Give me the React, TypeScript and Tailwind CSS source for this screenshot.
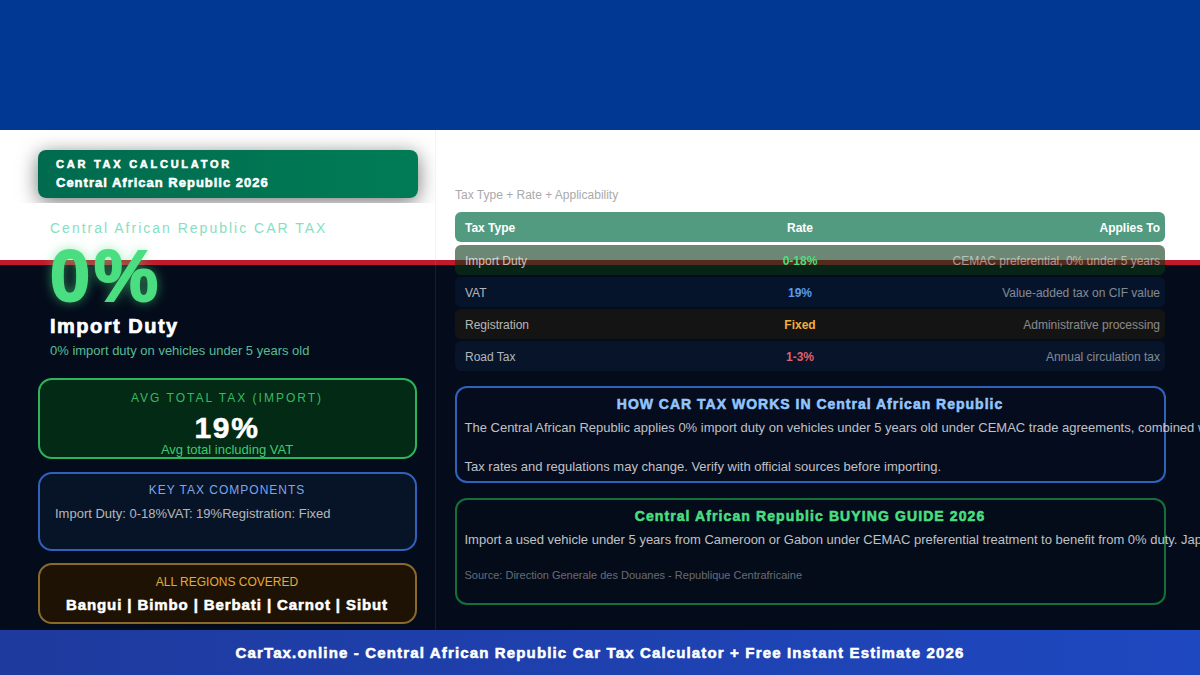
const heavy = "font-bold [-webkit-text-stroke:0.55px_currentColor]"

const rows = [
  { name: "Import Duty", rate: "0-18%", note: "CEMAC preferential, 0% under 5 years", bg: "bg-[rgba(10,55,22,0.6)]", color: "text-[#4ade80]" },
  { name: "VAT", rate: "19%", note: "Value-added tax on CIF value", bg: "bg-[rgba(10,40,80,0.3)]", color: "text-[#5b9be8]" },
  { name: "Registration", rate: "Fixed", note: "Administrative processing", bg: "bg-[rgba(70,45,0,0.25)]", color: "text-[#eeb040]" },
  { name: "Road Tax", rate: "1-3%", note: "Annual circulation tax", bg: "bg-[rgba(15,40,80,0.3)]", color: "text-[#e0606a]" },
]

function Backdrop() {
  return (
    <div className="[grid-area:1/1] flex flex-col">
      <div className="h-[130px] bg-[#003893]" />
      <div className="h-[130px] bg-white" />
      <div className="h-[5px] bg-[#c1192c]" />
      <div className="flex-1 bg-[#040c1b]" />
    </div>
  )
}

function LeftColumn() {
  return (
    <div className="w-[436px] shrink-0 border-r border-[rgba(74,222,128,0.12)]">
      <div className="h-[73px] overflow-hidden pt-5 pl-[38px] pr-[18px]">
        <div className="flex h-12 w-[380px] flex-col justify-center rounded-[8px] bg-gradient-to-r from-[#006b4f] to-[#007c55] pl-[18px] text-white shadow-[0_4px_20px_rgba(0,0,0,0.55)]">
          <div className={`${heavy} text-[11px] leading-[14px] tracking-[2.75px]`}>CAR TAX CALCULATOR</div>
          <div className={`${heavy} mt-[3px] text-[13px] leading-[18px] tracking-[1px]`}>Central African Republic 2026</div>
        </div>
      </div>
      <div className="pl-[50px] pt-[17px]">
        <div className="text-sm leading-4 tracking-[2px] text-[#86e0bf]">Central African Republic CAR TAX</div>
        <div className="mt-[4px] text-[72px] font-bold leading-[72px] tracking-[4px] text-[#4ade80] [-webkit-text-stroke:2px_currentColor] [text-shadow:0_0_12px_rgba(74,222,128,0.7)]">0%</div>
        <div className={`mt-[2px] text-xl font-bold leading-6 tracking-[1.5px] text-white [-webkit-text-stroke:0.7px_currentColor]`}>Import Duty</div>
        <div className="mt-[5px] text-[13px] leading-4 text-[#6ee7b7]/80">0% import duty on vehicles under 5 years old</div>
      </div>
      <div className="ml-[37.5px] mt-[19px] flex w-[379px] flex-col gap-[12.5px]">
        <div className="h-[81px] rounded-[14px] border-2 border-[#2fb35f] bg-[#032a14] pt-[10px] text-center">
          <div className="text-xs leading-4 tracking-[2px] text-[#4ade80]/80">AVG TOTAL TAX (IMPORT)</div>
          <div className={`${heavy} mt-[7px] text-[30px] leading-[30px] tracking-[1.6px] text-white`}>19%</div>
          <div className="text-[13px] leading-[14px] text-[#4ade80]/90">Avg total including VAT</div>
        </div>
        <div className="h-[79px] rounded-[14px] border-2 border-[#2f62b8] bg-[#071428] pt-2">
          <div className="text-center text-xs leading-4 tracking-[1px] text-[#7ba7e8]">KEY TAX COMPONENTS</div>
          <div className="mt-2 pl-[15.5px] text-[13px] leading-4 text-white/70">Import Duty: 0-18%VAT: 19%Registration: Fixed</div>
        </div>
        <div className="h-[61px] rounded-[14px] border-2 border-[#8a6a2a] bg-[#1e1204] pt-[9px] text-center">
          <div className="text-xs leading-4 text-[#e0ac3a]">ALL REGIONS COVERED</div>
          <div className={`${heavy} mt-[6px] text-[15px] leading-[18px] tracking-[0.9px] text-white`}>Bangui | Bimbo | Berbati | Carnot | Sibut</div>
        </div>
      </div>
    </div>
  )
}

function TaxTable() {
  return (
    <div className="flex flex-col gap-[2px] text-xs">
      <div className="mb-[1px] grid h-[30px] grid-cols-[290px_90px_1fr] items-center rounded-[6px] bg-[rgba(0,107,70,0.68)] pl-[10px] pr-[5px] pt-[1px] font-bold text-white">
        <div>Tax Type</div>
        <div className="text-center">Rate</div>
        <div className="text-right">Applies To</div>
      </div>
      {rows.map((row) => (
        <div key={row.name} className={`grid h-[30px] grid-cols-[290px_90px_1fr] items-center rounded-[6px] pl-[10px] pr-[5px] pt-[1px] ${row.bg}`}>
          <div className="text-white/70">{row.name}</div>
          <div className={`text-center font-bold ${row.color}`}>{row.rate}</div>
          <div className="text-right text-white/50">{row.note}</div>
        </div>
      ))}
    </div>
  )
}

function RightColumn() {
  return (
    <div className="min-w-0 flex-1 pl-[18.5px] pt-[58px]">
      <div className="w-[711px]">
        <div className="mb-[10px] pl-[0.5px] text-xs leading-[14px] text-[#aaaaaa]">Tax Type + Rate + Applicability</div>
        <div className="pl-[0.5px] pr-[0.5px]">
          <TaxTable />
        </div>
        <div className="mt-[15px] h-[97px] rounded-[12px] border-2 border-[#2f62b8] bg-[#040c1e] pl-2 pt-2">
          <div className={`${heavy} pr-2 text-center text-sm leading-4 tracking-[1px] text-[#93c5fd]`}>HOW CAR TAX WORKS IN Central African Republic</div>
          <div className="mt-[6px] whitespace-nowrap text-[13px] leading-5 text-white/75">
            The Central African Republic applies 0% import duty on vehicles under 5 years old under CEMAC trade agreements, combined with 19% VAT on CIF value.
          </div>
          <div className="mt-[19px] whitespace-nowrap text-[13px] leading-5 text-white/75">
            Tax rates and regulations may change. Verify with official sources before importing.
          </div>
        </div>
        <div className="mt-[15px] h-[107px] rounded-[12px] border-2 border-[#14703a] bg-[#040c1a] pl-2 pt-2">
          <div className={`${heavy} pr-2 text-center text-sm leading-4 tracking-[1.1px] text-[#4ade80]`}>Central African Republic BUYING GUIDE 2026</div>
          <div className="mt-[6px] whitespace-nowrap text-[13px] leading-5 text-white/75">
            Import a used vehicle under 5 years from Cameroon or Gabon under CEMAC preferential treatment to benefit from 0% duty. Japanese models remain popular.
          </div>
          <div className="mt-[18px] text-[11px] leading-[14px] text-white/40">Source: Direction Generale des Douanes - Republique Centrafricaine</div>
        </div>
      </div>
    </div>
  )
}

export default function App() {
  return (
    <div className="grid h-[675px] w-[1200px] overflow-hidden font-['Liberation_Sans',Arial,sans-serif]">
      <Backdrop />
      <div className="[grid-area:1/1] flex min-w-0 flex-col pt-[130px]">
        <div className="flex h-[500px] min-h-0 overflow-hidden">
          <LeftColumn />
          <RightColumn />
        </div>
        <div className={`${heavy} flex h-[45px] items-center justify-center bg-gradient-to-r from-[#1e3a9e] to-[#1e48c0] pt-[1px] text-[15px] tracking-[1.15px] text-white`}>
          CarTax.online - Central African Republic Car Tax Calculator + Free Instant Estimate 2026
        </div>
      </div>
    </div>
  )
}
